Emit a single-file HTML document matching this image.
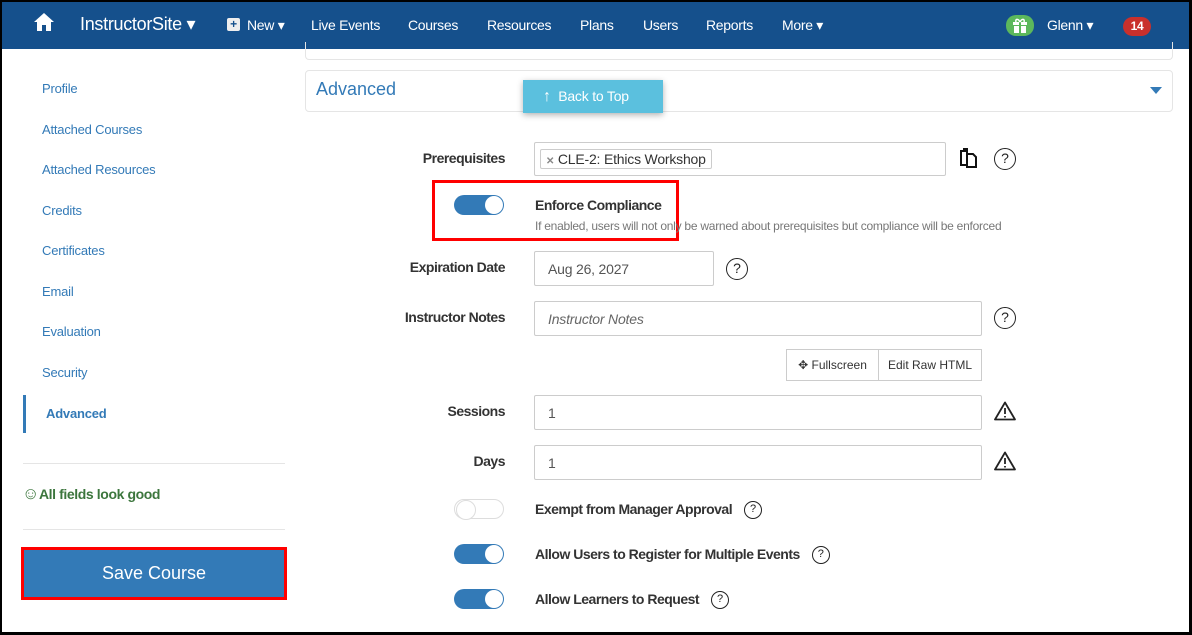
<!DOCTYPE html>
<html><head><style>
*{box-sizing:border-box;margin:0;padding:0}
body{width:1192px;height:635px;background:#000;font-family:"Liberation Sans",sans-serif;position:relative;overflow:hidden}
.page{position:absolute;left:2px;top:2px;width:1187px;height:630px;background:#fff;overflow:hidden}
.a{position:absolute;white-space:nowrap}
.nav{position:absolute;left:0;top:0;width:1187px;height:47px;background:#15508c;color:#fff;font-size:14px;letter-spacing:-0.3px}
.nav .a{top:15px}
.side{color:#337ab7;font-size:13px;letter-spacing:-0.2px}
.lbl{font-size:14px;font-weight:bold;color:#333;text-align:right;width:200px;letter-spacing:-0.5px}
.inp{position:absolute;border:1px solid #ccc;border-radius:2px;background:#fff;font-size:14px;color:#555;padding-left:13px;display:flex;align-items:center;letter-spacing:-0.2px}
.help{position:absolute;width:22px;height:22px;border:1.5px solid #222;border-radius:50%;font-size:14px;text-align:center;line-height:19px;color:#222}
.hi{display:inline-block;width:18px;height:18px;border:1.5px solid #222;border-radius:50%;font-size:11px;text-align:center;line-height:15px;color:#222;font-weight:normal;margin-left:12px;vertical-align:2px;letter-spacing:0}
.tg{position:absolute;width:50px;height:20px;border-radius:10px;background:#337ab7}
.tg::after{content:"";position:absolute;right:1px;top:1px;width:18px;height:18px;border-radius:50%;background:#fff}
.tg.off{background:#fff;border:1px solid #ddd}
.tg.off::after{left:1px;right:auto;top:0;border:1px solid #ddd}
.tl{font-size:14px;font-weight:bold;color:#333;letter-spacing:-0.5px}
</style></head><body><div class="page">
<div class="nav">
<svg class="a" style="left:32px;top:11px" width="20" height="18" viewBox="0 0 20 18"><path d="M10 0L0 9h3v9h5v-6h4v6h5V9h3z" fill="#fff"/></svg>
<div class="a" style="left:78px;top:12px;font-size:18px">InstructorSite ▾</div>
<div class="a" style="left:225px;top:16px;width:13px;height:13px;background:#eee;border-radius:2px;color:#15508c;font-size:12px;line-height:13px;text-align:center;font-weight:bold">+</div>
<div class="a" style="left:245px">New ▾</div>
<div class="a" style="left:309px">Live Events</div>
<div class="a" style="left:406px">Courses</div>
<div class="a" style="left:485px">Resources</div>
<div class="a" style="left:578px">Plans</div>
<div class="a" style="left:641px">Users</div>
<div class="a" style="left:704px">Reports</div>
<div class="a" style="left:780px">More ▾</div>
<div class="a" style="left:1004px;top:13px;width:28px;height:21px;border-radius:10px;background:#5cb85c"></div>
<svg class="a" style="left:1011px;top:16px" width="14" height="15" viewBox="0 0 14 15"><rect x="0" y="4" width="14" height="3" fill="#fff"/><rect x="1" y="8" width="12" height="7" fill="#fff"/><rect x="6" y="4" width="2" height="11" fill="#5cb85c"/><path d="M7 4C5 0 2 1 3 4M7 4C9 0 12 1 11 4" stroke="#fff" fill="none" stroke-width="1.5"/></svg>
<div class="a" style="left:1045px">Glenn ▾</div>
<div class="a" style="left:1121px;top:15px;width:28px;height:19px;border-radius:10px;background:#c9302c;text-align:center;font-size:12px;font-weight:bold;line-height:19px">14</div>
</div>
<div class="a" style="left:303px;top:40px;width:868px;height:18px;border:1px solid #e5e5e5;border-top:none;border-radius:0 0 4px 4px"></div>
<div class="a" style="left:303px;top:68px;width:868px;height:42px;border:1px solid #e5e5e5;border-radius:4px"></div>
<div class="a" style="left:314px;top:77px;font-size:18px;color:#337ab7">Advanced</div>
<div class="a" style="left:1148px;top:85px;width:0;height:0;border-left:6px solid transparent;border-right:6px solid transparent;border-top:7px solid #337ab7"></div>
<div class="a" style="left:521px;top:78px;width:140px;height:33px;background:#5bc0de;color:#fff;font-size:14px;line-height:33px;padding-left:20px;box-shadow:0 2px 6px rgba(0,0,0,.3);letter-spacing:-0.2px"><b style="font-size:16px">↑</b>&nbsp; Back to Top</div>

<div class="a side" style="left:40px;top:79px">Profile</div>
<div class="a side" style="left:40px;top:120px">Attached Courses</div>
<div class="a side" style="left:40px;top:160px">Attached Resources</div>
<div class="a side" style="left:40px;top:201px">Credits</div>
<div class="a side" style="left:40px;top:241px">Certificates</div>
<div class="a side" style="left:40px;top:282px">Email</div>
<div class="a side" style="left:40px;top:322px">Evaluation</div>
<div class="a side" style="left:40px;top:363px">Security</div>
<div class="a" style="left:21px;top:393px;width:3px;height:38px;background:#337ab7"></div>
<div class="a side" style="left:44px;top:404px;font-weight:bold">Advanced</div>
<div class="a" style="left:21px;top:461px;width:262px;height:1px;background:#e5e5e5"></div>
<div class="a" style="left:20px;top:482px;font-size:14px;font-weight:bold;color:#3c763d;letter-spacing:-0.4px"><span style="font-size:17px;font-weight:normal">☺︎</span>All fields look good</div>
<div class="a" style="left:21px;top:527px;width:262px;height:1px;background:#e5e5e5"></div>
<div class="a" style="left:19px;top:545px;width:266px;height:53px;border:3px solid #f00;background:#337ab7;color:#fff;font-size:18px;text-align:center;line-height:46px">Save Course</div>

<div class="a lbl" style="left:303px;top:148px">Prerequisites</div>
<div class="inp" style="left:532px;top:140px;width:412px;height:34px;padding-left:5px"><span style="border:1px solid #ccc;border-radius:2px;padding:1px 5px;font-size:14px;color:#333"><b style="color:#888;font-size:10px">✕</b> CLE-2: Ethics Workshop</span></div>
<svg class="a" style="left:957px;top:146px" width="19" height="20" viewBox="0 0 19 20"><path d="M7 3H2v14h5" fill="none" stroke="#111" stroke-width="2"/><path d="M4 1h4v4" fill="none" stroke="#111" stroke-width="2"/><path d="M8 6h6l3 3v10H8z" fill="none" stroke="#111" stroke-width="2"/></svg>
<div class="help" style="left:992px;top:146px">?</div>
<div class="a" style="left:430px;top:178px;width:247px;height:61px;border:3px solid #f00"></div>
<div class="tg" style="left:452px;top:193px"></div>
<div class="a tl" style="left:533px;top:195px">Enforce Compliance</div>
<div class="a" style="left:533px;top:217px;font-size:12px;color:#777;letter-spacing:-0.25px">If enabled, users will not only be warned about prerequisites but compliance will be enforced</div>

<div class="a lbl" style="left:303px;top:257px">Expiration Date</div>
<div class="inp" style="left:532px;top:249px;width:180px;height:35px">Aug 26, 2027</div>
<div class="help" style="left:724px;top:256px">?</div>
<div class="a lbl" style="left:303px;top:307px">Instructor Notes</div>
<div class="inp" style="left:532px;top:299px;width:448px;height:35px;font-style:italic;color:#666">Instructor Notes</div>
<div class="help" style="left:992px;top:305px">?</div>
<div class="a" style="left:784px;top:347px;width:93px;height:32px;border:1px solid #ccc;font-size:12px;line-height:30px;text-align:center;color:#333">✥ Fullscreen</div>
<div class="a" style="left:876px;top:347px;width:104px;height:32px;border:1px solid #ccc;font-size:12px;line-height:30px;text-align:center;color:#333">Edit Raw HTML</div>

<div class="a lbl" style="left:303px;top:401px">Sessions</div>
<div class="inp" style="left:532px;top:393px;width:448px;height:35px">1</div>
<svg class="a" style="left:992px;top:399px" width="22" height="20" viewBox="0 0 22 20"><path d="M11 1.5L1 18.5h20z" fill="none" stroke="#222" stroke-width="1.8" stroke-linejoin="round"/><path d="M11 7v6M11 15v1.5" stroke="#222" stroke-width="1.8"/></svg>
<div class="a lbl" style="left:303px;top:451px">Days</div>
<div class="inp" style="left:532px;top:443px;width:448px;height:35px">1</div>
<svg class="a" style="left:992px;top:449px" width="22" height="20" viewBox="0 0 22 20"><path d="M11 1.5L1 18.5h20z" fill="none" stroke="#222" stroke-width="1.8" stroke-linejoin="round"/><path d="M11 7v6M11 15v1.5" stroke="#222" stroke-width="1.8"/></svg>

<div class="tg off" style="left:452px;top:497px"></div>
<div class="a tl" style="left:533px;top:499px">Exempt from Manager Approval<span class="hi">?</span></div>
<div class="tg" style="left:452px;top:542px"></div>
<div class="a tl" style="left:533px;top:544px">Allow Users to Register for Multiple Events<span class="hi">?</span></div>
<div class="tg" style="left:452px;top:587px"></div>
<div class="a tl" style="left:533px;top:589px">Allow Learners to Request<span class="hi">?</span></div>
</div></body></html>
